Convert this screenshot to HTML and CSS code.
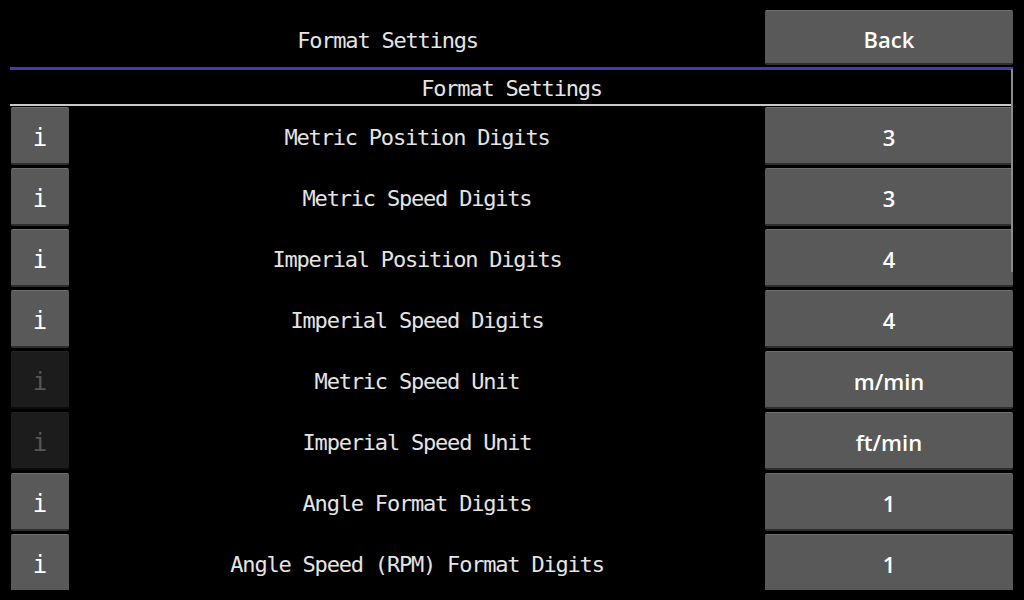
FILE: index.html
```html
<!DOCTYPE html>
<html lang="en">
<head>
  <meta charset="UTF-8" />
  <title>Format Settings</title>
  <link rel="stylesheet" href="styles.css">
</head>
<body>
  <div class="screen">
    <div class="top-bar">
      <div class="page-title">Format Settings</div>
      <button class="btn btn-value btn-back">Back</button>
    </div>

    <div class="settings">
      <div class="section-head">Format Settings</div>

      <div class="rows">
        <div class="row">
          <button class="btn btn-info">i</button>
          <div class="label">Metric Position Digits</div>
          <button class="btn btn-value">3</button>
        </div>
        <div class="row">
          <button class="btn btn-info">i</button>
          <div class="label">Metric Speed Digits</div>
          <button class="btn btn-value">3</button>
        </div>
        <div class="row">
          <button class="btn btn-info">i</button>
          <div class="label">Imperial Position Digits</div>
          <button class="btn btn-value">4</button>
        </div>
        <div class="row">
          <button class="btn btn-info">i</button>
          <div class="label">Imperial Speed Digits</div>
          <button class="btn btn-value">4</button>
        </div>
        <div class="row">
          <button class="btn btn-info" disabled>i</button>
          <div class="label">Metric Speed Unit</div>
          <button class="btn btn-value">m/min</button>
        </div>
        <div class="row">
          <button class="btn btn-info" disabled>i</button>
          <div class="label">Imperial Speed Unit</div>
          <button class="btn btn-value">ft/min</button>
        </div>
        <div class="row">
          <button class="btn btn-info">i</button>
          <div class="label">Angle Format Digits</div>
          <button class="btn btn-value">1</button>
        </div>
        <div class="row">
          <button class="btn btn-info">i</button>
          <div class="label">Angle Speed (RPM) Format Digits</div>
          <button class="btn btn-value">1</button>
        </div>
      </div>

      <!-- scroll position marker -->
      <div class="scroll-thumb"></div>
    </div>
  </div>
</body>
</html>
```

FILE: styles.css
```css
* {
  box-sizing: border-box;
}

html, body {
  margin: 0;
  height: 100%;
  background: #000;
}

body {
  color: #e4e4e4;
  font-family: 'DejaVu Sans Mono', 'Liberation Mono', monospace;
  font-size: 22px;
  letter-spacing: -1.2px;
  overflow: hidden;
}

.screen {
  display: flex;
  flex-direction: column;
  width: 1003px;
  height: 590px;
  margin-left: 10px;
  padding-top: 10px;
}

.top-bar {
  display: flex;
  height: 55px;
  flex: none;
}

.page-title {
  flex: 1;
  display: flex;
  align-items: center;
  justify-content: center;
  padding-top: 5px;
}

.settings {
  position: relative;
  flex: 1;
  display: flex;
  flex-direction: column;
  margin-top: 2px;
  overflow: hidden;
}

.section-head {
  height: 39px;
  flex: none;
  display: flex;
  align-items: center;
  justify-content: center;
  border-top: 3px solid #3f3fb4;
  border-bottom: 2px solid #c8c8c8;
  padding-top: 2px;
}

.rows {
  display: flex;
  flex-direction: column;
  gap: 3px;
  padding-top: 1px;
}

.row {
  display: flex;
  align-items: stretch;
  height: 58px;
  flex: none;
}

.label {
  flex: 1;
  display: flex;
  align-items: center;
  justify-content: center;
  padding-top: 3px;
}

.btn {
  border: none;
  border-top: 1px solid #707070;
  border-bottom: 2px solid #2e2e2e;
  border-radius: 2px;
  background-color: #595959;
  color: #fff;
  padding: 0;
  letter-spacing: normal;
  cursor: pointer;
}

.btn-info {
  width: 58px;
  margin-left: 1px;
  padding-top: 4px;
  font-family: 'DejaVu Sans Mono', monospace;
  font-size: 24px;
}

.btn-info:disabled {
  background-color: #1c1c1c;
  border-top-color: #242424;
  border-bottom-color: #0c0c0c;
  color: #575757;
  cursor: default;
}

.btn-value {
  width: 248px;
  padding-top: 2px;
  font-family: 'Open Sans', 'Noto Sans', sans-serif;
  font-weight: 600;
  font-size: 22px;
}

.btn-back {
  padding-top: 4px;
}

.scroll-thumb {
  position: absolute;
  top: 2px;
  right: 0;
  width: 2px;
  height: 203px;
  background: #8c8c8c;
}
```
